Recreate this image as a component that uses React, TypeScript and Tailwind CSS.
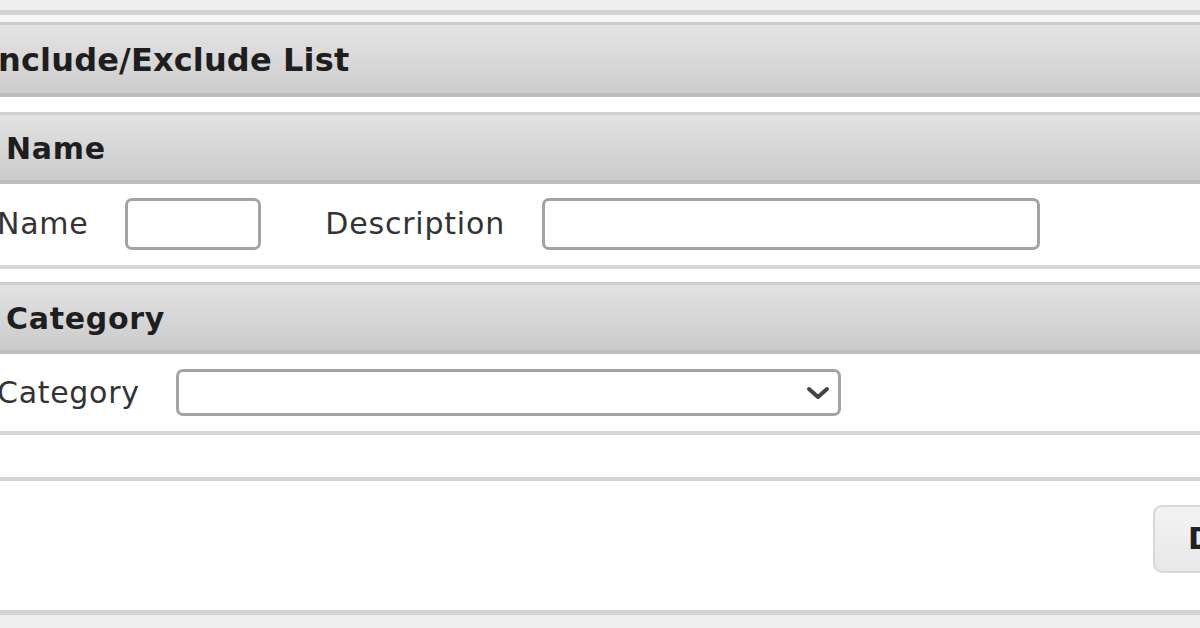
import React from "react";

function SectionHeader({ title, big }: { title: string; big?: boolean }) {
  return (
    <div
      className={
        big
          ? "h-[75px] flex items-center border-t-[3px] border-b-[4px] border-t-[#cdcdcd] border-b-[#bdbdbd] bg-gradient-to-b from-[#e4e4e4] to-[#cdcdcd]"
          : "h-[72px] flex items-center border-t-[3px] border-b-[4px] border-t-[#cfcfcf] border-b-[#bdbdbd] bg-gradient-to-b from-[#e2e2e2] to-[#cbcbcb]"
      }
    >
      <span
        className={
          big
            ? "ml-[-14px] pt-[1px] text-[32px] font-bold text-[#1e1e1e] leading-none tracking-[0.15px]"
            : "ml-[6px] pt-[2px] text-[30px] font-bold text-[#1e1e1e] leading-none tracking-[0.7px]"
        }
      >
        {title}
      </span>
    </div>
  );
}

export default function App() {
  return (
    <div className="w-[1200px] h-[628px] overflow-hidden bg-white font-['DejaVu_Sans',sans-serif] flex flex-col">
      <div className="h-[10px] bg-[#efefef]" />
      <div className="h-[5px] bg-[#d2d2d2]" />
      <div className="h-[7px] bg-[#f6f6f6]" />

      <SectionHeader title="Include/Exclude List" big />

      <div className="h-[15px] bg-white" />

      <SectionHeader title="Name" />

      <div className="flex items-center pt-[14px] pb-[15px] border-b-[4px] border-b-[#d6d6d6]">
        <span className="ml-[-3px] text-[30px] text-[#333333] leading-none tracking-[0.7px]">Name</span>
        <div className="ml-[37px] w-[136px] h-[52px] rounded-[7px] border-[3px] border-[#a3a3a3] bg-white" />
        <span className="ml-[64px] text-[30px] text-[#333333] leading-none tracking-[0.8px]">Description</span>
        <div className="ml-[37px] w-[498px] h-[52px] rounded-[7px] border-[3px] border-[#a3a3a3] bg-white" />
      </div>

      <div className="h-[13px] bg-white" />

      <SectionHeader title="Category" />

      <div className="flex items-center pt-[15px] pb-[15px] border-b-[4px] border-b-[#d6d6d6]">
        <span className="ml-[-3px] text-[30px] text-[#333333] leading-none tracking-[0.7px]">Category</span>
        <div className="ml-[36px] w-[665px] h-[47px] rounded-[7px] border-[3px] border-[#a3a3a3] bg-white flex items-center justify-end pr-[8px]">
          <svg width="24" height="16" viewBox="0 0 24 16" fill="none">
            <path d="M3 4 L12 12 L21 4" stroke="#444" strokeWidth="4" strokeLinecap="round" strokeLinejoin="round" />
          </svg>
        </div>
      </div>

      <div className="h-[46px] bg-white border-b-[4px] border-b-[#d4d4d4]" />

      <div className="h-[134px] flex items-start justify-end pt-[24px] bg-white border-b-[5px] border-b-[#d2d2d2]">
        <div className="mr-[-60px] w-[107px] h-[68px] rounded-[9px] border-[2px] border-[#d8d8d8] bg-gradient-to-b from-[#f3f3f3] to-[#e8e8e8] flex items-center pl-[33px]">
          <span className="text-[30px] font-bold text-[#222] leading-none">Done</span>
        </div>
      </div>

      <div className="flex-1 bg-[#eeeeee]" />
    </div>
  );
}
